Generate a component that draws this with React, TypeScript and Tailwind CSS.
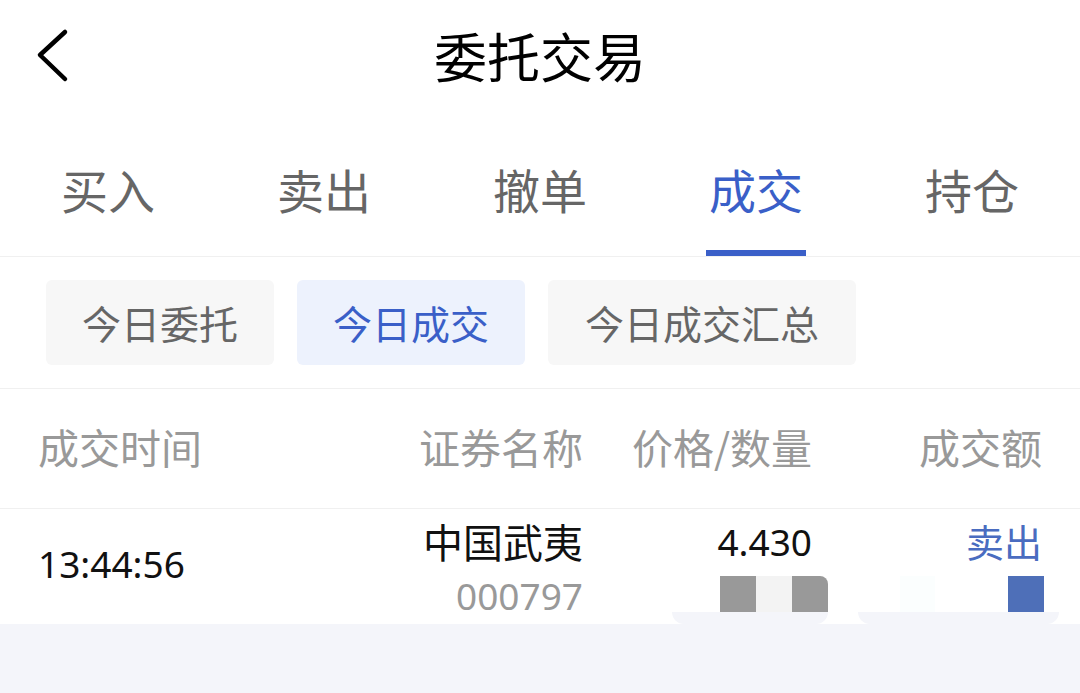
const TABS = ['买入', '卖出', '撤单', '成交', '持仓'];
const FILTERS = [
  { label: '今日委托', w: 'w-[228px]' },
  { label: '今日成交', w: 'w-[228px]', active: true },
  { label: '今日成交汇总', w: 'w-[308px]' },
];

export default function App() {
  return (
    <div className="flex h-[693px] w-[1080px] flex-col bg-[#f4f5fa] font-['Noto_Sans','Noto_Sans_CJK_SC',sans-serif]">
      <div className="bg-white">
        {/* Title bar */}
        <div className="relative flex h-[110px] items-center justify-center">
          <svg
            className="absolute left-[34px] top-[28px]"
            width="36"
            height="56"
            viewBox="0 0 36 56"
            fill="none"
            stroke="#000"
            strokeWidth="4.5"
            strokeLinecap="round"
            strokeLinejoin="round"
          >
            <path d="M31 4 L6 27 L31 51" />
          </svg>
          <h1 className="text-[53px] leading-none font-['Noto_Sans_CJK_SC',sans-serif] text-black">委托交易</h1>
        </div>

        {/* Tabs */}
        <div className="grid h-[147px] grid-cols-5 border-b border-[#f0f0f0]">
          {TABS.map((t) => {
            const active = t === '成交';
            return (
              <div key={t} className="flex flex-col items-center justify-end">
                <span
                  className={
                    'text-[47px] leading-none font-[Noto_Sans_CJK_SC] ' +
                    (active ? 'text-[#3a5fc8]' : 'text-[#666666]')
                  }
                >
                  {t}
                </span>
                <div className={'mt-[38px] h-[6px] w-[100px] ' + (active ? 'bg-[#3a5fc8]' : 'bg-transparent')} />
              </div>
            );
          })}
        </div>

        {/* Filter chips */}
        <div className="flex gap-[23px] border-b border-[#f0f0f0] px-[46px] py-[23px]">
          {FILTERS.map((f) => (
            <div
              key={f.label}
              className={
                'flex h-[85px] items-center justify-center rounded-[6px] text-[39px] leading-none font-[Noto_Sans_CJK_SC] ' +
                f.w +
                ' ' +
                (f.active ? 'bg-[#edf2fd] text-[#3a5fc8]' : 'bg-[#f7f7f7] text-[#666666]')
              }
            >
              {f.label}
            </div>
          ))}
        </div>

        {/* Table header */}
        <div className="grid h-[120px] grid-cols-[302px_243px_229px_230px] items-center border-b border-[#f0f0f0] px-[38px] pb-[4px] text-[41px] leading-none text-[#999999] font-[Noto_Sans_CJK_SC]">
          <span>成交时间</span>
          <span className="text-right">证券名称</span>
          <span className="text-right">价格/数量</span>
          <span className="text-right">成交额</span>
        </div>

        {/* Data row */}
        <div className="grid h-[103px] grid-cols-[302px_243px_229px_230px] px-[38px]">
          <div className="flex items-center pt-[4px] text-[37px] leading-none text-[#111111]">13:44:56</div>
          <div className="flex flex-col items-end pt-[12px]">
            <span className="text-[40px] leading-none text-[#111111] font-[Noto_Sans_CJK_SC]">中国武夷</span>
            <span className="mt-[16px] text-[37px] leading-none text-[#999999]">000797</span>
          </div>
          <div className="flex flex-col items-end pt-[14px]">
            <span className="text-[37px] leading-none text-[#111111]">4.430</span>
            <div className="mr-[-16px] mt-[16px] flex">
              <div className="h-[36px] w-[36px] bg-[#999999]" />
              <div className="h-[36px] w-[36px] bg-[#f3f3f3]" />
              <div className="h-[36px] w-[36px] rounded-tr-[8px] bg-[#999999]" />
            </div>
          </div>
          <div className="flex flex-col items-end pt-[13px]">
            <span className="text-[38px] leading-none text-[#4a6cc0] font-[Noto_Sans_CJK_SC]">卖出</span>
            <div className="mr-[-2px] mt-[16px] flex">
              <div className="h-[36px] w-[35px] bg-[#fbfefe]" />
              <div className="h-[36px] w-[73px]" />
              <div className="h-[36px] w-[36px] bg-[#4e6fb8]" />
            </div>
          </div>
        </div>

        {/* redaction fringe */}
        <div className="flex h-[12px]">
          <div className="w-[672px]" />
          <div className="w-[156px] rounded-b-[14px] bg-[#f4f5fa]" />
          <div className="w-[30px]" />
          <div className="w-[201px] rounded-b-[14px] bg-[#f4f5fa]" />
        </div>
      </div>
    </div>
  );
}
